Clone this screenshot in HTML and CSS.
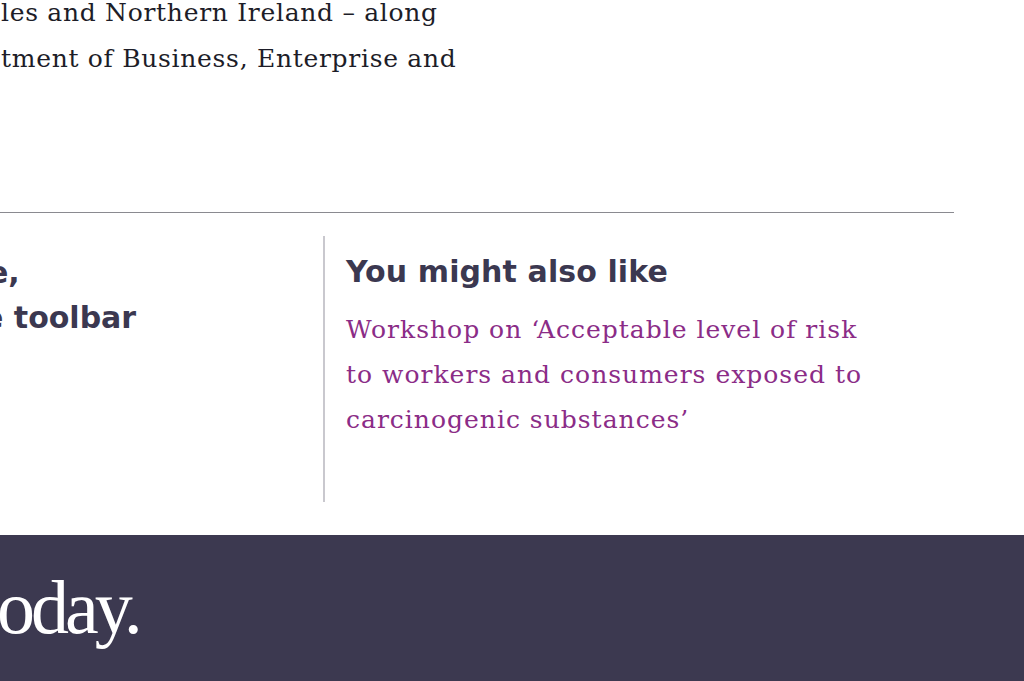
FILE: index.html
```html
<!DOCTYPE html>
<html lang="en">
<head>
<meta charset="utf-8">
<title>Article</title>
<link rel="stylesheet" href="styles.css">
</head>
<body>
<main class="page">
  <div class="article-end">
    <p class="body-text">les and Northern Ireland – along<br>tment of Business, Enterprise and</p>
  </div>
  <hr class="rule">
  <div class="related">
    <div class="share">
      <h2 class="share-title"><span class="share-line share-line-1">e,</span><span class="share-line share-line-2">e toolbar</span></h2>
    </div>
    <aside class="also">
      <h2 class="also-title">You might also like</h2>
      <a class="also-link" href="#">Workshop on ‘Acceptable level of risk to workers and consumers exposed to carcinogenic substances’</a>
    </aside>
  </div>
</main>
<footer class="footer">
  <div class="logo">oday.</div>
</footer>
</body>
</html>
```
FILE: styles.css
```css
html, body {
  margin: 0;
  padding: 0;
  background: #ffffff;
  overflow: hidden;
}

.page {
  width: 954px;
  padding-bottom: 33px;
}

.article-end {
  padding: 0 0 0 1px;
}

.body-text {
  margin: -10px 0 0 0;
  font-family: "DejaVu Serif", serif;
  font-size: 25px;
  letter-spacing: 0.7px;
  line-height: 46px;
  color: #1d1d28;
  height: 198px;
}

.rule {
  margin: 24px 0 0 0;
  border: 0;
  border-top: 1px solid #8a8a90;
  height: 0;
}

.related {
  display: flex;
  margin-top: 23px;
}

.share {
  width: 323px;
  border-right: 2px solid #c9c8ce;
  height: 266px;
  overflow: hidden;
}

.share-title {
  margin: 14px 0 0 0;
  font-family: "DejaVu Sans", sans-serif;
  font-weight: 700;
  font-size: 30px;
  line-height: 45px;
  color: #3b3850;
}

.share-line {
  display: block;
  white-space: nowrap;
}

.share-line-1 {
  margin-left: -12px;
}

.share-line-2 {
  margin-left: -17px;
}

.also {
  padding-left: 21px;
  width: 560px;
}

.also-title {
  margin: 14px 0 0 0;
  font-family: "DejaVu Sans", sans-serif;
  font-weight: 700;
  font-size: 30px;
  letter-spacing: 0.1px;
  line-height: 44px;
  color: #3b3850;
}

.also-link {
  display: block;
  margin-top: 13px;
  font-family: "DejaVu Serif", serif;
  font-size: 25px;
  letter-spacing: 1px;
  line-height: 45px;
  color: #8b2c87;
  text-decoration: none;
  width: 525px;
}

.footer {
  background: #3c3950;
  height: 146px;
  overflow: hidden;
}

.logo {
  margin-left: -3px;
  padding-top: 27px;
  font-family: "Liberation Serif", serif;
  font-size: 76px;
  letter-spacing: -4px;
  line-height: 90px;
  color: #ffffff;
}
```
